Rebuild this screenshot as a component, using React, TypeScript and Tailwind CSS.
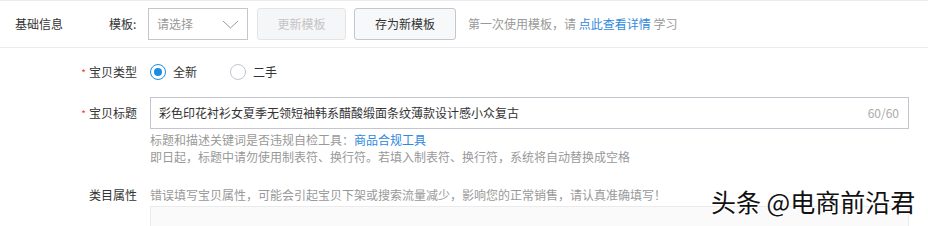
import React from 'react';

const FONT = "font-['Noto_Sans_CJK_SC','Noto_Sans',sans-serif]";

const Label: React.FC<{ text: string; required?: boolean }> = ({ text, required }) => (
  <div className="w-[137px] shrink-0 text-right text-[12px] text-[#333]">
    {required && <span className="mr-[3px] text-[10px] text-[#f33]">*</span>}
    {text}
  </div>
);

const Radio: React.FC<{ checked?: boolean; label: string }> = ({ checked, label }) => (
  <label className="flex items-center">
    <span
      className={
        checked
          ? 'flex h-[16px] w-[16px] items-center justify-center rounded-full border border-[#1b8ce0] bg-white'
          : 'h-[16px] w-[16px] rounded-full border border-[#c4c6cf] bg-white'
      }
    >
      {checked && <span className="h-[8px] w-[8px] rounded-full bg-[#1b8ce0]" />}
    </span>
    <span className="ml-[7px] text-[12px] text-[#333]">{label}</span>
  </label>
);

export default function App() {
  return (
    <div className={`relative h-[226px] w-[928px] overflow-hidden bg-white ${FONT}`}>
      {/* header row */}
      <div className="flex h-[48px] items-center border-t border-b border-[#ebebeb] pl-[15px] text-[12px]">
        <span className="w-[94px] text-[#333]">基础信息</span>
        <span className="w-[39px] text-[#333]">模板:</span>
        <div className="flex h-[32px] w-[100px] items-center justify-between border border-[#c4c6cf] pl-[8px] pr-[8px]">
          <span className="text-[#999]">请选择</span>
          <svg width="17" height="9" viewBox="0 0 17 9" fill="none">
            <polyline points="1,1 8.5,8 16,1" stroke="#9a9a9a" strokeWidth="1" />
          </svg>
        </div>
        <button
          type="button"
          className="ml-[9px] h-[32px] w-[89px] rounded-[3px] border border-[#e3e4e8] bg-[#f5f6f8] text-[12px] text-[#c4c4c4]"
        >
          更新模板
        </button>
        <button
          type="button"
          className="ml-[8px] h-[32px] w-[102px] rounded-[3px] border border-[#c4c6cf] bg-[#f7f8fa] text-[12px] text-[#333]"
        >
          存为新模板
        </button>
        <span className="ml-[12px] text-[#999]">
          第一次使用模板，请 <span className="text-[#3089dc]">点此查看详情</span> 学习
        </span>
      </div>

      {/* 宝贝类型 */}
      <div className="mt-[8px] flex h-[32px] items-center">
        <Label text="宝贝类型" required />
        <div className="ml-[13px] flex items-center gap-[33px]">
          <Radio checked label="全新" />
          <Radio label="二手" />
        </div>
      </div>

      {/* 宝贝标题 */}
      <div className="mt-[9px] flex">
        <div className="flex h-[32px] items-center">
          <Label text="宝贝标题" required />
        </div>
        <div className="ml-[13px] w-[759px]">
          <div className="flex h-[32px] items-center justify-between border border-[#c4c6cf] pl-[8px] pr-[9px] text-[12px]">
            <span className="text-[#333]">彩色印花衬衫女夏季无领短袖韩系醋酸缎面条纹薄款设计感小众复古</span>
            <span className="text-[#aaa]">60/60</span>
          </div>
          <div className="mt-[2px] text-[12px] leading-[17px] text-[#999]">
            <p>
              标题和描述关键词是否违规自检工具：<span className="text-[#3089dc]">商品合规工具</span>
            </p>
            <p>即日起，标题中请勿使用制表符、换行符。若填入制表符、换行符，系统将自动替换成空格</p>
          </div>
        </div>
      </div>

      {/* 类目属性 */}
      <div className="mt-[21px] flex">
        <div className="flex h-[17px] items-center">
          <Label text="类目属性" />
        </div>
        <div className="ml-[13px] w-[759px]">
          <p className="text-[12px] leading-[17px] text-[#999]">
            错误填写宝贝属性，可能会引起宝贝下架或搜索流量减少，影响您的正常销售，请认真准确填写！
          </p>
          <div className="mt-[3px] h-[40px] border border-[#ebebeb] bg-[#fafafa]" />
        </div>
      </div>

      {/* watermark */}
      <div className="absolute left-[711px] top-[185px] text-[25px] leading-[32px] text-[#111] [text-shadow:1px_1px_0_#fff,-1px_-1px_0_#fff,1px_-1px_0_#fff,-1px_1px_0_#fff]">
        头条 @电商前沿君
      </div>
    </div>
  );
}
